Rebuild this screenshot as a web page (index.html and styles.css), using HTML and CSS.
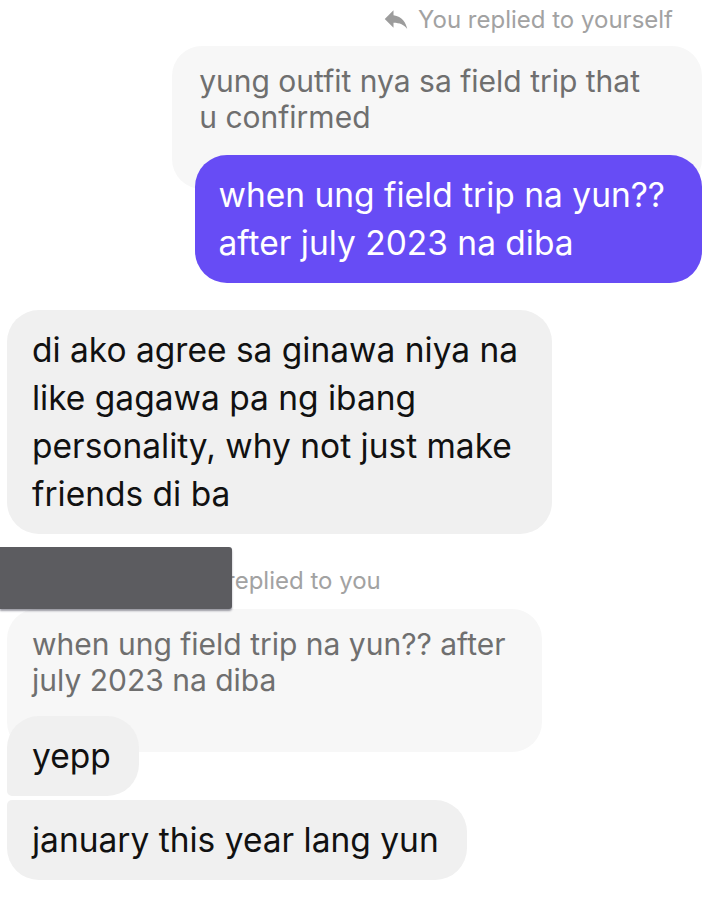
FILE: index.html
```html
<!DOCTYPE html>
<html>
<head>
<meta name="viewport" content="width=device-width, initial-scale=1.0" charset="UTF-8">
<title>Messages</title>
<link rel="stylesheet" href="styles.css">
</head>
<body>
<div class="thread">

	<!-- my reply -->
	<div class="group out">
		<div class="reply_head">
			<svg class="reply_icon" viewBox="0 0 24 24"><path d="M10 9V5l-7 7 7 7v-4.1c5 0 8.5 1.6 11 5.1-1-5-4-10-11-11z"/></svg>
			You replied to yourself
		</div>
		<div class="quote quote_out">yung outfit nya sa field trip that<br>u confirmed</div>
		<div class="bubble purple">when ung field trip na yun??<br>after july 2023 na diba</div>
	</div>

	<div class="group in">
		<div class="bubble grey">di ako agree sa ginawa niya na<br>like gagawa pa ng ibang<br>personality, why not just make<br>friends di ba</div>
	</div>

	<!-- their reply -->
	<div class="group in">
		<div class="reply_head left">
			<div class="redact"></div>
			<span class="head_text">replied to you</span>
		</div>
		<div class="quote">when ung field trip na yun?? after<br>july 2023 na diba</div>
		<div class="bubble grey first">yepp</div>
		<div class="bubble grey last">january this year lang yun</div>
	</div>

</div>
</body>
</html>
```

FILE: styles.css
```css
body {
  margin: 0;
  background: #ffffff;
  font-family: Inter, "Liberation Sans", sans-serif;
}

.thread {
  padding: 0 18px 0 7px;
}

.group {
  display: flex;
  flex-direction: column;
}

.out {
  align-items: flex-end;
}

.in {
  align-items: flex-start;
}

.reply_head {
  display: flex;
  align-items: center;
  gap: 7px;
  padding: 4px 29px 0 0;
  height: 30px;
  margin-bottom: 12px;
  font-size: 24px;
  color: #a2a2a2;
}

.reply_icon {
  width: 30px;
  height: 30px;
  fill: #9c9c9c;
}

.reply_head.left {
  gap: 0;
  padding: 0;
  height: 62px;
  margin: 13px 0 0 -7px;
}

.redact {
  width: 232px;
  height: 62px;
  background: #5c5c60;
  border-radius: 0 3px 3px 0;
  box-shadow: 0 2px 2px rgba(40, 40, 60, 0.45);
  z-index: 1;
}

.head_text {
  margin-left: -6px;
  padding-top: 4px;
}

.quote {
  width: fit-content;
  padding: 17px 36px 54px 25px;
  border-radius: 30px;
  background: #f7f7f7;
  color: #6f6f6f;
  font-size: 30px;
  line-height: 36px;
}

.quote_out {
  padding: 17px 62px 54px 27px;
}

.bubble {
  width: fit-content;
  padding: 16px 37px 16px 25px;
  border-radius: 32px;
  font-size: 33.5px;
  line-height: 48px;
  position: relative;
}

.purple {
  margin-top: -34px;
  background: #674cf5;
  color: #ffffff;
  padding-left: 24px;
}

.grey {
  margin-top: 27px;
  padding-right: 34px;
  background: #f0f0f0;
  color: #111111;
}

.grey.first {
  margin-top: -36px;
  padding-right: 28px;
  border-radius: 32px 32px 32px 5px;
}

.grey.last {
  margin-top: 4px;
  padding-right: 28px;
  border-radius: 5px 32px 32px 32px;
}
```
